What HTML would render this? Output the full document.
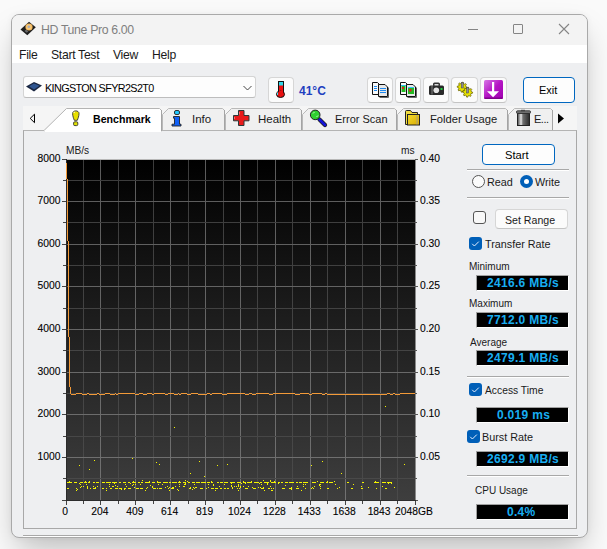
<!DOCTYPE html>
<html><head><meta charset="utf-8">
<style>
*{margin:0;padding:0;box-sizing:border-box}
html,body{width:607px;height:549px;overflow:hidden;background:#fafafa;font-family:"Liberation Sans",sans-serif;color:#1a1a1a}
.a{position:absolute}
.t{position:absolute;white-space:nowrap;line-height:1}
#win{left:11px;top:14px;width:577px;height:524px;border:1px solid #a9a9a9;border-radius:8px;background:#eeeff1;overflow:hidden;box-shadow:0 16px 32px -6px rgba(0,0,0,0.26),0 0 6px rgba(0,0,0,0.05)}
.btn{position:absolute;background:#fbfbfb;border:1px solid #d6d6d6;border-bottom-color:#c4c4c4;border-radius:4px}
.vbox{position:absolute;left:476px;width:93px;height:16px;background:#000;border-top:1px solid #a0a0a0;border-left:1px solid #a0a0a0;border-bottom:1px solid #fff;border-right:1px solid #fff}
.vt{position:absolute;white-space:nowrap;line-height:1;font-weight:bold;color:#18aef2;font-size:12px;letter-spacing:0.3px}
.cb{position:absolute;width:13px;height:13px;border-radius:3px;background:#005fb8}
.sep{position:absolute;left:467px;width:102px;height:2px;border-top:1px solid #a8a8a8;border-bottom:1px solid #fff}
.lbl{font-size:11px}
.yl{font-size:10.3px;color:#000;-webkit-text-stroke:0.1px #000}
.tab{position:absolute;top:108px;height:23px;background:#f0f0f0;border:1px solid #b4b4b4;border-bottom:none;border-radius:0 4px 0 0}
</style></head><body>
<div id="win" class="a">
</div>
<!-- title bar -->
<div class="a" style="left:12px;top:15px;width:575px;height:30px;background:#f3f3f3;border-radius:7px 7px 0 0"></div>
<div class="a" style="left:12px;top:45px;width:575px;height:18px;background:#fff"></div>
<div class="t" style="left:41px;top:24px;font-size:12.3px;letter-spacing:-0.35px;color:#808080">HD Tune Pro 6.00</div>
<!-- window controls -->
<div class="a" style="left:468px;top:29px;width:10px;height:1px;background:#858585"></div>
<div class="a" style="left:513px;top:24px;width:10px;height:10px;border:1px solid #858585;border-radius:1px"></div>
<svg class="a" style="left:558px;top:23px" width="12" height="12"><path d="M1 1L11 11M11 1L1 11" stroke="#858585" stroke-width="1.1"/></svg>
<!-- menu -->
<div class="t" style="left:19px;top:49px;font-size:12.2px;letter-spacing:-0.3px">File</div>
<div class="t" style="left:51px;top:49px;font-size:12.2px;letter-spacing:-0.3px">Start Test</div>
<div class="t" style="left:113px;top:49px;font-size:12.2px;letter-spacing:-0.3px">View</div>
<div class="t" style="left:152px;top:49px;font-size:12.2px;letter-spacing:-0.3px">Help</div>

<!-- combo -->
<div class="a" style="left:23px;top:76px;width:233px;height:22px;background:#fdfdfd;border:1px solid #d4d4d4;border-bottom-color:#bdbdbd;border-radius:3px"></div>
<div class="t" style="left:45px;top:83px;font-size:10.8px;letter-spacing:-0.62px;color:#000">KINGSTON SFYR2S2T0</div>
<svg class="a" style="left:243px;top:85px" width="9" height="6"><path d="M0.5 1L4.5 5L8.5 1" fill="none" stroke="#444" stroke-width="1"/></svg>

<!-- thermo -->
<div class="btn" style="left:268px;top:77px;width:26px;height:26px"></div>
<div class="t" style="left:299px;top:85px;font-size:12px;font-weight:bold;color:#1f3fbf">41°C</div>

<!-- toolbar -->
<div class="btn" style="left:367px;top:77px;width:26px;height:26px"></div>
<div class="btn" style="left:395px;top:77px;width:26px;height:26px"></div>
<div class="btn" style="left:423px;top:77px;width:26px;height:26px"></div>
<div class="btn" style="left:451px;top:77px;width:27px;height:26px"></div>
<div class="btn" style="left:480px;top:77px;width:27px;height:26px"></div>

<!-- exit -->
<div class="a" style="left:523px;top:77px;width:52px;height:26px;background:#fdfdfd;border:1px solid #0067c0;border-radius:4px"></div>
<div class="t" style="left:539px;top:85px;font-size:11px;color:#000">Exit</div>

<!-- tab strip -->
<div class="a" style="left:23px;top:106px;width:554px;height:25px;background:#f5f5f5"></div>
<svg class="a" style="left:29px;top:113px" width="8" height="11"><path d="M5.5 1.2L1.2 5.4L5.5 9.7Z" fill="none" stroke="#000" stroke-width="1"/></svg>
<svg class="a" style="left:557px;top:113px" width="8" height="11"><path d="M1 0.5L7 5.5L1 10.5Z" fill="#000"/></svg>

<!-- panel -->
<div class="a" style="left:23px;top:130px;width:554px;height:399px;background:#eeeff1;border:1px solid #a8a8a8;border-top-color:#b4b4b4"></div>

<!-- tabs (inactive) -->
<svg class="a" style="left:0;top:0" width="607" height="140">
 <path d="M162.5 130V114.5L168.5 108.5H222.5L224.5 110.5V130" fill="#f0f0f0" stroke="#b9b9b9"/>
 <path d="M224.5 110V130" stroke="#a4a4a4"/>
 <path d="M225.5 130V114.5L231.5 108.5H299.5L301.5 110.5V130" fill="#f0f0f0" stroke="#b9b9b9"/>
 <path d="M301.5 110V130" stroke="#a4a4a4"/>
 <path d="M302.5 130V114.5L308.5 108.5H394.5L396.5 110.5V130" fill="#f0f0f0" stroke="#b9b9b9"/>
 <path d="M396.5 110V130" stroke="#a4a4a4"/>
 <path d="M397.5 130V114.5L403.5 108.5H505.5L507.5 110.5V130" fill="#f0f0f0" stroke="#b9b9b9"/>
 <path d="M507.5 110V130" stroke="#a4a4a4"/>
 <path d="M508.5 130V114.5L514.5 108.5H550.5L552.5 110.5V130" fill="#f0f0f0" stroke="#b9b9b9"/>
 <path d="M552.5 110V130" stroke="#a4a4a4"/>
 <path d="M44 130.5L66.5 108.5H159.5L161.5 110.5V131H44Z" fill="#fff" stroke="#b4b4b4"/>
 <path d="M161.5 110V131" stroke="#a4a4a4"/>
 <rect x="44.5" y="130" width="116.5" height="2" fill="#fff"/>
</svg>
<!-- tab icons -->
<div class="t" style="left:93px;top:114px;font-size:10.6px;font-weight:bold;color:#000">Benchmark</div>
<div class="t" style="left:192px;top:114px;font-size:11.5px">Info</div>
<div class="t" style="left:258px;top:114px;font-size:11.5px">Health</div>
<div class="t" style="left:335px;top:114px;font-size:11px">Error Scan</div>
<div class="t" style="left:430px;top:114px;font-size:11.2px">Folder Usage</div>
<div class="t" style="left:534px;top:114px;font-size:11px;letter-spacing:-0.5px">E...</div>

<!-- icons -->
<svg class="a" style="left:0;top:0" width="607" height="140">
 <defs>
  <linearGradient id="pg" x1="0" y1="0" x2="1" y2="1"><stop offset="0" stop-color="#d778e6"/><stop offset="0.5" stop-color="#b414c4"/><stop offset="1" stop-color="#a000b0"/></linearGradient>
  <linearGradient id="tg" x1="0" y1="0" x2="1" y2="0"><stop offset="0" stop-color="#444"/><stop offset="0.3" stop-color="#e8e8e8"/><stop offset="0.45" stop-color="#707070"/><stop offset="1" stop-color="#2a2a2a"/></linearGradient>
  <linearGradient id="fg" x1="0" y1="0" x2="1" y2="1"><stop offset="0" stop-color="#f4de30"/><stop offset="1" stop-color="#d8a800"/></linearGradient>
 </defs>
 <!-- title hdd -->
 <path d="M20.5 29.5L29 21.8L35.8 27.3L27.3 35.2Z" fill="#1e1e1e"/>
 <circle cx="29" cy="27" r="3.6" fill="#f2b65a"/>
 <circle cx="29" cy="27" r="2.6" fill="#f6c878"/>
 <circle cx="28.8" cy="26.8" r="1.3" fill="#a9adbb"/>
 <path d="M24.5 31L26.8 32.8L28.4 31.4L26.2 29.6Z" fill="#6a6a6a"/>
 <!-- ssd -->
 <path d="M26 86.5L34 82L42 85.5L34 91.5Z" fill="#1a2640"/>
 <path d="M29 86.3L34 83.5L39.5 85.7L34 89.5Z" fill="#2f5590"/>
 <!-- thermometer -->
 <rect x="278.5" y="81.5" width="5" height="12" fill="#f01010" stroke="#111"/>
 <rect x="279" y="82" width="4" height="3.5" fill="#30d8e8"/>
 <ellipse cx="280.5" cy="94.3" rx="4" ry="3.2" fill="#e81010" stroke="#111"/>
 <rect x="279" y="91" width="4" height="3" fill="#e81010"/>
 <path d="M277.5 92.5V95" stroke="#40e0f0"/>
 <!-- copy text -->
 <path d="M372.5 82.5H377.5L379 84V94.5H372.5Z" fill="#f8f8f8" stroke="#111"/>
 <path d="M374 86.5H377M374 88.5H377M374 90.5H377" stroke="#1f8af0"/>
 <path d="M378.5 84.5H385L387.5 87V96.5H378.5Z" fill="#e8e8e8" stroke="#111"/>
 <path d="M380 88.5H386M380 90.5H386M380 92.5H386" stroke="#1f8af0"/>
 <path d="M388.5 87.5V97.5H379.5" fill="none" stroke="#666"/>
 <!-- copy image -->
 <path d="M400.5 82.5H405.5L407 84V94.5H400.5Z" fill="#f8f8f8" stroke="#111"/>
 <rect x="401.5" y="86" width="4" height="6" fill="#22bb22"/><rect x="402" y="87" width="2" height="2" fill="#e02020"/><rect x="401" y="85" width="5" height="1" fill="#30c0f0"/>
 <path d="M406.5 84.5H413L415.5 87V96.5H406.5Z" fill="#e8e8e8" stroke="#111"/>
 <rect x="408" y="88" width="6" height="6" fill="#22bb22"/><rect x="409" y="89" width="2.5" height="2.5" fill="#e02020"/><rect x="408" y="87" width="6" height="1" fill="#30c0f0"/>
 <path d="M416.5 87.5V97.5H407.5" fill="none" stroke="#666"/>
 <!-- camera -->
 <rect x="433" y="82.5" width="7" height="4" rx="1.5" fill="#333"/>
 <rect x="434.5" y="84" width="4" height="2" fill="#ddd"/>
 <rect x="429" y="85.5" width="15" height="9.5" rx="1.5" fill="#2a2a2a"/>
 <rect x="431" y="86" width="2" height="8.5" fill="#555"/>
 <circle cx="436.3" cy="90.3" r="2.8" fill="#e4e4e4"/>
 <rect x="440.5" y="88" width="2" height="2" fill="#20d040"/>
 <!-- gears -->
 <g fill="#e8e400" stroke="#5a5200" stroke-width="0.7">
  <path d="M462.20 82.20L463.18 82.30L463.58 83.87L464.20 84.21L465.74 83.66L466.36 84.42L465.53 85.82L465.73 86.50L467.20 87.20L467.10 88.18L465.53 88.58L465.19 89.20L465.74 90.74L464.98 91.36L463.58 90.53L462.90 90.73L462.20 92.20L461.22 92.10L460.82 90.53L460.20 90.19L458.66 90.74L458.04 89.98L458.87 88.58L458.67 87.90L457.20 87.20L457.30 86.22L458.87 85.82L459.21 85.20L458.66 83.66L459.42 83.04L460.82 83.87L461.50 83.67Z"/>
  <path d="M467.60 87.20L468.58 87.30L468.98 88.87L469.60 89.21L471.14 88.66L471.76 89.42L470.93 90.82L471.13 91.50L472.60 92.20L472.50 93.18L470.93 93.58L470.59 94.20L471.14 95.74L470.38 96.36L468.98 95.53L468.30 95.73L467.60 97.20L466.62 97.10L466.22 95.53L465.60 95.19L464.06 95.74L463.44 94.98L464.27 93.58L464.07 92.90L462.60 92.20L462.70 91.22L464.27 90.82L464.61 90.20L464.06 88.66L464.82 88.04L466.22 88.87L466.90 88.67Z"/>
 </g>
 <rect x="461.2" y="82.5" width="2" height="5.5" fill="#8c8c9c" stroke="#444" stroke-width="0.5"/>
 <rect x="466.6" y="87.5" width="2" height="5.5" fill="#8c8c9c" stroke="#444" stroke-width="0.5"/>
 <!-- purple download -->
 <rect x="484" y="80" width="19" height="19" rx="1.5" fill="url(#pg)"/>
 <rect x="484.5" y="97.5" width="18" height="1.5" fill="#80008a"/>
 <rect x="492" y="82" width="2.2" height="10" fill="#fff"/>
 <path d="M487 91.3H499L493.1 97.2Z" fill="#fff"/>
 <!-- exclamation -->
 <path d="M72.6 113.5C72.6 110 79 110 79 113.5C79 116 78 118.5 77.3 120.3H74.3C73.6 118.5 72.6 116 72.6 113.5Z" fill="#e8e000" stroke="#333" stroke-width="0.9"/>
 <path d="M73.8 113L74.6 111.8" stroke="#fff" stroke-width="1"/>
 <rect x="73.6" y="121.8" width="4.2" height="3.8" rx="1.2" fill="#e0e000" stroke="#333" stroke-width="0.9"/>
 <!-- info i -->
 <rect x="174.5" y="110.5" width="5" height="4" rx="1.5" fill="#20c8ff" stroke="#222" stroke-width="0.9"/>
 <path d="M173.5 116.5H179.5V124.2H181V126H172V124.2H174.5V118.2H173.5Z" fill="#1060f8" stroke="#222" stroke-width="0.9"/>
 <!-- red cross -->
 <path d="M238.5 110.5H244V115.5H249V120.8H244V125.5H238.5V120.8H233.5V115.5H238.5Z" fill="#e81c1c" stroke="#2a3a3a" stroke-width="1"/>
 <path d="M239.5 112V114.5M234.5 117V119" stroke="#ff8080" stroke-width="0.8"/>
 <!-- magnifier -->
 <path d="M319.5 119.5L325 125" stroke="#222" stroke-width="4.2" stroke-linecap="round"/>
 <path d="M319.5 119.5L325 125" stroke="#1414d8" stroke-width="2.6" stroke-linecap="round"/>
 <circle cx="315.2" cy="114.9" r="4.8" fill="#30d030" stroke="#222" stroke-width="1"/>
 <path d="M313 113.5L314.5 112M316.5 117L318 115.5" stroke="#c8ffc8" stroke-width="1"/>
 <!-- folder -->
 <path d="M405.5 111.5Q405.5 110.5 406.5 110.5H410.5L412 112.5H417.5V124.5H405.5Z" fill="#f0dc40" stroke="#222" stroke-width="1"/>
 <rect x="407.5" y="114.5" width="12" height="10.5" fill="url(#fg)" stroke="#222" stroke-width="1"/>
 <path d="M417 115.5V124.5" stroke="#999" stroke-width="0.8"/>
 <!-- trash -->
 <rect x="517.5" y="113" width="12" height="12.5" fill="url(#tg)" stroke="#222" stroke-width="1"/>
 <rect x="516.5" y="110.8" width="14" height="2.6" rx="1" fill="#777" stroke="#222" stroke-width="0.8"/>
 <rect x="521" y="109.8" width="4" height="1.5" fill="#444"/>
</svg>
<!-- chart -->
<svg class="a" style="left:0;top:0" width="607" height="549">
 <defs><linearGradient id="g" x1="0" y1="0" x2="0" y2="1"><stop offset="0" stop-color="#000"/><stop offset="1" stop-color="#3e3e3e"/></linearGradient>
 <linearGradient id="gmaj" gradientUnits="userSpaceOnUse" x1="0" y1="159" x2="0" y2="500"><stop offset="0" stop-color="#5a5a5a"/><stop offset="1" stop-color="#727272"/></linearGradient>
 <linearGradient id="gmin" gradientUnits="userSpaceOnUse" x1="0" y1="159" x2="0" y2="500"><stop offset="0" stop-color="#3c3c3c"/><stop offset="1" stop-color="#4a4a4a"/></linearGradient></defs>
 <g shape-rendering="crispEdges"><rect x="66" y="159" width="349" height="341" fill="url(#g)"/>
 <rect x="83" y="159" width="1" height="341" fill="url(#gmin)"/><rect x="100" y="159" width="1" height="341" fill="url(#gmaj)"/><rect x="118" y="159" width="1" height="341" fill="url(#gmin)"/><rect x="135" y="159" width="1" height="341" fill="url(#gmaj)"/><rect x="153" y="159" width="1" height="341" fill="url(#gmin)"/><rect x="170" y="159" width="1" height="341" fill="url(#gmaj)"/><rect x="188" y="159" width="1" height="341" fill="url(#gmin)"/><rect x="205" y="159" width="1" height="341" fill="url(#gmaj)"/><rect x="223" y="159" width="1" height="341" fill="url(#gmin)"/><rect x="240" y="159" width="1" height="341" fill="url(#gmaj)"/><rect x="257" y="159" width="1" height="341" fill="url(#gmin)"/><rect x="275" y="159" width="1" height="341" fill="url(#gmaj)"/><rect x="292" y="159" width="1" height="341" fill="url(#gmin)"/><rect x="310" y="159" width="1" height="341" fill="url(#gmaj)"/><rect x="327" y="159" width="1" height="341" fill="url(#gmin)"/><rect x="345" y="159" width="1" height="341" fill="url(#gmaj)"/><rect x="362" y="159" width="1" height="341" fill="url(#gmin)"/><rect x="380" y="159" width="1" height="341" fill="url(#gmaj)"/><rect x="397" y="159" width="1" height="341" fill="url(#gmin)"/><rect x="66" y="478" width="349" height="1" fill="#494949"/><rect x="66" y="457" width="349" height="1" fill="#6f6f6f"/><rect x="66" y="436" width="349" height="1" fill="#474747"/><rect x="66" y="414" width="349" height="1" fill="#6c6c6c"/><rect x="66" y="393" width="349" height="1" fill="#464646"/><rect x="66" y="372" width="349" height="1" fill="#696969"/><rect x="66" y="350" width="349" height="1" fill="#444444"/><rect x="66" y="329" width="349" height="1" fill="#666666"/><rect x="66" y="308" width="349" height="1" fill="#424242"/><rect x="66" y="286" width="349" height="1" fill="#636363"/><rect x="66" y="265" width="349" height="1" fill="#404040"/><rect x="66" y="244" width="349" height="1" fill="#606060"/><rect x="66" y="222" width="349" height="1" fill="#3f3f3f"/><rect x="66" y="201" width="349" height="1" fill="#5d5d5d"/><rect x="66" y="180" width="349" height="1" fill="#3d3d3d"/><rect x="66" y="159" width="349" height="1" fill="#b8b8b8"/><rect x="66" y="159" width="1" height="341" fill="#2a2a2a"/><rect x="415" y="159" width="1" height="342" fill="#8a8a8a"/><rect x="62" y="500" width="4" height="1" fill="#444"/><rect x="415" y="500" width="3" height="1" fill="#555"/><rect x="63" y="478" width="3" height="1" fill="#444"/><rect x="415" y="478" width="2" height="1" fill="#555"/><rect x="62" y="457" width="4" height="1" fill="#444"/><rect x="415" y="457" width="3" height="1" fill="#555"/><rect x="63" y="436" width="3" height="1" fill="#444"/><rect x="415" y="436" width="2" height="1" fill="#555"/><rect x="62" y="414" width="4" height="1" fill="#444"/><rect x="415" y="414" width="3" height="1" fill="#555"/><rect x="63" y="393" width="3" height="1" fill="#444"/><rect x="415" y="393" width="2" height="1" fill="#555"/><rect x="62" y="372" width="4" height="1" fill="#444"/><rect x="415" y="372" width="3" height="1" fill="#555"/><rect x="63" y="350" width="3" height="1" fill="#444"/><rect x="415" y="350" width="2" height="1" fill="#555"/><rect x="62" y="329" width="4" height="1" fill="#444"/><rect x="415" y="329" width="3" height="1" fill="#555"/><rect x="63" y="308" width="3" height="1" fill="#444"/><rect x="415" y="308" width="2" height="1" fill="#555"/><rect x="62" y="286" width="4" height="1" fill="#444"/><rect x="415" y="286" width="3" height="1" fill="#555"/><rect x="63" y="265" width="3" height="1" fill="#444"/><rect x="415" y="265" width="2" height="1" fill="#555"/><rect x="62" y="244" width="4" height="1" fill="#444"/><rect x="415" y="244" width="3" height="1" fill="#555"/><rect x="63" y="222" width="3" height="1" fill="#444"/><rect x="415" y="222" width="2" height="1" fill="#555"/><rect x="62" y="201" width="4" height="1" fill="#444"/><rect x="415" y="201" width="3" height="1" fill="#555"/><rect x="63" y="180" width="3" height="1" fill="#444"/><rect x="415" y="180" width="2" height="1" fill="#555"/><rect x="62" y="159" width="4" height="1" fill="#444"/><rect x="415" y="159" width="3" height="1" fill="#555"/><rect x="66" y="500" width="1" height="5" fill="#444"/><rect x="83" y="500" width="1" height="4" fill="#444"/><rect x="100" y="500" width="1" height="5" fill="#444"/><rect x="118" y="500" width="1" height="4" fill="#444"/><rect x="135" y="500" width="1" height="5" fill="#444"/><rect x="153" y="500" width="1" height="4" fill="#444"/><rect x="170" y="500" width="1" height="5" fill="#444"/><rect x="188" y="500" width="1" height="4" fill="#444"/><rect x="205" y="500" width="1" height="5" fill="#444"/><rect x="223" y="500" width="1" height="4" fill="#444"/><rect x="240" y="500" width="1" height="5" fill="#444"/><rect x="257" y="500" width="1" height="4" fill="#444"/><rect x="275" y="500" width="1" height="5" fill="#444"/><rect x="292" y="500" width="1" height="4" fill="#444"/><rect x="310" y="500" width="1" height="5" fill="#444"/><rect x="327" y="500" width="1" height="4" fill="#444"/><rect x="345" y="500" width="1" height="5" fill="#444"/><rect x="362" y="500" width="1" height="4" fill="#444"/><rect x="380" y="500" width="1" height="5" fill="#444"/><rect x="397" y="500" width="1" height="4" fill="#444"/><rect x="415" y="500" width="1" height="5" fill="#444"/><rect x="66" y="500" width="350" height="1" fill="#2c2c2c"/>
 <rect x="79" y="465" width="1" height="1" fill="#f4f400"/><rect x="89" y="469" width="1" height="1" fill="#f4f400"/><rect x="94" y="460" width="1" height="1" fill="#f4f400"/><rect x="132" y="458" width="1" height="1" fill="#f4f400"/><rect x="174" y="427" width="1" height="1" fill="#f4f400"/><rect x="156" y="462" width="1" height="1" fill="#f4f400"/><rect x="159" y="464" width="1" height="1" fill="#f4f400"/><rect x="190" y="473" width="1" height="1" fill="#f4f400"/><rect x="199" y="461" width="1" height="1" fill="#f4f400"/><rect x="204" y="476" width="1" height="1" fill="#f4f400"/><rect x="217" y="465" width="1" height="1" fill="#f4f400"/><rect x="227" y="464" width="1" height="1" fill="#f4f400"/><rect x="385" y="406" width="1" height="1" fill="#f4f400"/><rect x="311" y="465" width="1" height="1" fill="#f4f400"/><rect x="322" y="461" width="1" height="1" fill="#f4f400"/><rect x="341" y="473" width="1" height="1" fill="#f4f400"/><rect x="404" y="464" width="1" height="1" fill="#f4f400"/><rect x="67" y="482" width="5" height="1" fill="#f4f400"/><rect x="74" y="482" width="3" height="1" fill="#f4f400"/><rect x="80" y="482" width="3" height="1" fill="#f4f400"/><rect x="84" y="482" width="3" height="1" fill="#f4f400"/><rect x="88" y="482" width="2" height="1" fill="#f4f400"/><rect x="93" y="482" width="2" height="1" fill="#f4f400"/><rect x="96" y="482" width="3" height="1" fill="#f4f400"/><rect x="102" y="482" width="3" height="1" fill="#f4f400"/><rect x="106" y="482" width="5" height="1" fill="#f4f400"/><rect x="112" y="482" width="5" height="1" fill="#f4f400"/><rect x="119" y="482" width="2" height="1" fill="#f4f400"/><rect x="123" y="482" width="3" height="1" fill="#f4f400"/><rect x="128" y="482" width="2" height="1" fill="#f4f400"/><rect x="132" y="482" width="4" height="1" fill="#f4f400"/><rect x="138" y="482" width="2" height="1" fill="#f4f400"/><rect x="141" y="482" width="2" height="1" fill="#f4f400"/><rect x="145" y="482" width="5" height="1" fill="#f4f400"/><rect x="152" y="482" width="3" height="1" fill="#f4f400"/><rect x="157" y="482" width="4" height="1" fill="#f4f400"/><rect x="163" y="482" width="5" height="1" fill="#f4f400"/><rect x="169" y="482" width="2" height="1" fill="#f4f400"/><rect x="172" y="482" width="5" height="1" fill="#f4f400"/><rect x="178" y="482" width="3" height="1" fill="#f4f400"/><rect x="183" y="482" width="3" height="1" fill="#f4f400"/><rect x="188" y="482" width="2" height="1" fill="#f4f400"/><rect x="192" y="482" width="3" height="1" fill="#f4f400"/><rect x="196" y="482" width="4" height="1" fill="#f4f400"/><rect x="201" y="482" width="5" height="1" fill="#f4f400"/><rect x="207" y="482" width="3" height="1" fill="#f4f400"/><rect x="211" y="482" width="2" height="1" fill="#f4f400"/><rect x="217" y="482" width="2" height="1" fill="#f4f400"/><rect x="220" y="482" width="3" height="1" fill="#f4f400"/><rect x="224" y="482" width="4" height="1" fill="#f4f400"/><rect x="230" y="482" width="5" height="1" fill="#f4f400"/><rect x="237" y="482" width="4" height="1" fill="#f4f400"/><rect x="243" y="482" width="3" height="1" fill="#f4f400"/><rect x="247" y="482" width="5" height="1" fill="#f4f400"/><rect x="254" y="482" width="5" height="1" fill="#f4f400"/><rect x="260" y="482" width="2" height="1" fill="#f4f400"/><rect x="264" y="482" width="5" height="1" fill="#f4f400"/><rect x="271" y="482" width="5" height="1" fill="#f4f400"/><rect x="278" y="482" width="2" height="1" fill="#f4f400"/><rect x="281" y="482" width="2" height="1" fill="#f4f400"/><rect x="285" y="482" width="3" height="1" fill="#f4f400"/><rect x="289" y="482" width="5" height="1" fill="#f4f400"/><rect x="296" y="482" width="2" height="1" fill="#f4f400"/><rect x="299" y="482" width="3" height="1" fill="#f4f400"/><rect x="303" y="482" width="5" height="1" fill="#f4f400"/><rect x="312" y="482" width="4" height="1" fill="#f4f400"/><rect x="320" y="482" width="4" height="1" fill="#f4f400"/><rect x="326" y="482" width="2" height="1" fill="#f4f400"/><rect x="329" y="482" width="4" height="1" fill="#f4f400"/><rect x="347" y="482" width="2" height="1" fill="#f4f400"/><rect x="362" y="482" width="2" height="1" fill="#f4f400"/><rect x="374" y="482" width="5" height="1" fill="#f4f400"/><rect x="382" y="482" width="4" height="1" fill="#f4f400"/><rect x="387" y="482" width="5" height="1" fill="#f4f400"/><rect x="67" y="488" width="2" height="1" fill="#f4f400"/><rect x="76" y="488" width="1" height="1" fill="#f4f400"/><rect x="87" y="488" width="1" height="1" fill="#f4f400"/><rect x="90" y="488" width="1" height="1" fill="#f4f400"/><rect x="93" y="488" width="3" height="1" fill="#f4f400"/><rect x="102" y="488" width="2" height="1" fill="#f4f400"/><rect x="106" y="488" width="1" height="1" fill="#f4f400"/><rect x="110" y="488" width="2" height="1" fill="#f4f400"/><rect x="115" y="488" width="3" height="1" fill="#f4f400"/><rect x="119" y="488" width="3" height="1" fill="#f4f400"/><rect x="124" y="488" width="2" height="1" fill="#f4f400"/><rect x="128" y="488" width="3" height="1" fill="#f4f400"/><rect x="136" y="488" width="3" height="1" fill="#f4f400"/><rect x="140" y="488" width="3" height="1" fill="#f4f400"/><rect x="146" y="488" width="1" height="1" fill="#f4f400"/><rect x="153" y="488" width="3" height="1" fill="#f4f400"/><rect x="157" y="488" width="1" height="1" fill="#f4f400"/><rect x="159" y="488" width="3" height="1" fill="#f4f400"/><rect x="168" y="488" width="1" height="1" fill="#f4f400"/><rect x="171" y="488" width="3" height="1" fill="#f4f400"/><rect x="189" y="488" width="2" height="1" fill="#f4f400"/><rect x="194" y="488" width="1" height="1" fill="#f4f400"/><rect x="200" y="488" width="3" height="1" fill="#f4f400"/><rect x="206" y="488" width="1" height="1" fill="#f4f400"/><rect x="211" y="488" width="3" height="1" fill="#f4f400"/><rect x="215" y="488" width="3" height="1" fill="#f4f400"/><rect x="220" y="488" width="2" height="1" fill="#f4f400"/><rect x="224" y="488" width="2" height="1" fill="#f4f400"/><rect x="227" y="488" width="2" height="1" fill="#f4f400"/><rect x="232" y="488" width="1" height="1" fill="#f4f400"/><rect x="237" y="488" width="1" height="1" fill="#f4f400"/><rect x="239" y="488" width="1" height="1" fill="#f4f400"/><rect x="245" y="488" width="3" height="1" fill="#f4f400"/><rect x="253" y="488" width="3" height="1" fill="#f4f400"/><rect x="261" y="488" width="3" height="1" fill="#f4f400"/><rect x="268" y="488" width="2" height="1" fill="#f4f400"/><rect x="271" y="488" width="1" height="1" fill="#f4f400"/><rect x="273" y="488" width="1" height="1" fill="#f4f400"/><rect x="282" y="488" width="3" height="1" fill="#f4f400"/><rect x="289" y="488" width="3" height="1" fill="#f4f400"/><rect x="296" y="488" width="3" height="1" fill="#f4f400"/><rect x="305" y="488" width="1" height="1" fill="#f4f400"/><rect x="311" y="488" width="1" height="1" fill="#f4f400"/><rect x="313" y="488" width="1" height="1" fill="#f4f400"/><rect x="320" y="488" width="1" height="1" fill="#f4f400"/><rect x="327" y="488" width="2" height="1" fill="#f4f400"/><rect x="337" y="488" width="1" height="1" fill="#f4f400"/><rect x="351" y="488" width="2" height="1" fill="#f4f400"/><rect x="361" y="488" width="2" height="1" fill="#f4f400"/><rect x="376" y="488" width="1" height="1" fill="#f4f400"/><rect x="385" y="488" width="2" height="1" fill="#f4f400"/><rect x="142" y="480" width="1" height="1" fill="#f4f400"/><rect x="185" y="480" width="1" height="1" fill="#f4f400"/><rect x="263" y="480" width="1" height="1" fill="#f4f400"/><rect x="270" y="480" width="1" height="1" fill="#f4f400"/><rect x="69" y="481" width="1" height="1" fill="#f4f400"/><rect x="85" y="481" width="1" height="1" fill="#f4f400"/><rect x="89" y="481" width="1" height="1" fill="#f4f400"/><rect x="133" y="481" width="1" height="1" fill="#f4f400"/><rect x="149" y="481" width="1" height="1" fill="#f4f400"/><rect x="157" y="481" width="1" height="1" fill="#f4f400"/><rect x="179" y="481" width="1" height="1" fill="#f4f400"/><rect x="187" y="481" width="1" height="1" fill="#f4f400"/><rect x="211" y="481" width="1" height="1" fill="#f4f400"/><rect x="243" y="481" width="1" height="1" fill="#f4f400"/><rect x="251" y="481" width="1" height="1" fill="#f4f400"/><rect x="270" y="481" width="1" height="1" fill="#f4f400"/><rect x="274" y="481" width="1" height="1" fill="#f4f400"/><rect x="317" y="481" width="1" height="1" fill="#f4f400"/><rect x="327" y="481" width="1" height="1" fill="#f4f400"/><rect x="334" y="481" width="1" height="1" fill="#f4f400"/><rect x="375" y="481" width="1" height="1" fill="#f4f400"/><rect x="79" y="483" width="1" height="1" fill="#f4f400"/><rect x="114" y="483" width="1" height="1" fill="#f4f400"/><rect x="130" y="483" width="1" height="1" fill="#f4f400"/><rect x="185" y="483" width="1" height="1" fill="#f4f400"/><rect x="231" y="483" width="1" height="1" fill="#f4f400"/><rect x="241" y="483" width="1" height="1" fill="#f4f400"/><rect x="245" y="483" width="1" height="1" fill="#f4f400"/><rect x="259" y="483" width="1" height="1" fill="#f4f400"/><rect x="267" y="483" width="1" height="1" fill="#f4f400"/><rect x="278" y="483" width="1" height="1" fill="#f4f400"/><rect x="388" y="483" width="1" height="1" fill="#f4f400"/><rect x="391" y="483" width="1" height="1" fill="#f4f400"/><rect x="80" y="484" width="1" height="1" fill="#f4f400"/><rect x="86" y="484" width="1" height="1" fill="#f4f400"/><rect x="109" y="484" width="1" height="1" fill="#f4f400"/><rect x="125" y="484" width="1" height="1" fill="#f4f400"/><rect x="133" y="484" width="1" height="1" fill="#f4f400"/><rect x="135" y="484" width="1" height="1" fill="#f4f400"/><rect x="140" y="484" width="1" height="1" fill="#f4f400"/><rect x="158" y="484" width="1" height="1" fill="#f4f400"/><rect x="162" y="484" width="1" height="1" fill="#f4f400"/><rect x="179" y="484" width="1" height="1" fill="#f4f400"/><rect x="184" y="484" width="1" height="1" fill="#f4f400"/><rect x="185" y="484" width="1" height="1" fill="#f4f400"/><rect x="194" y="484" width="1" height="1" fill="#f4f400"/><rect x="208" y="484" width="1" height="1" fill="#f4f400"/><rect x="213" y="484" width="1" height="1" fill="#f4f400"/><rect x="224" y="484" width="1" height="1" fill="#f4f400"/><rect x="238" y="484" width="1" height="1" fill="#f4f400"/><rect x="261" y="484" width="1" height="1" fill="#f4f400"/><rect x="267" y="484" width="1" height="1" fill="#f4f400"/><rect x="303" y="484" width="1" height="1" fill="#f4f400"/><rect x="305" y="484" width="1" height="1" fill="#f4f400"/><rect x="319" y="484" width="1" height="1" fill="#f4f400"/><rect x="320" y="484" width="1" height="1" fill="#f4f400"/><rect x="335" y="484" width="1" height="1" fill="#f4f400"/><rect x="353" y="484" width="1" height="1" fill="#f4f400"/><rect x="115" y="485" width="1" height="1" fill="#f4f400"/><rect x="132" y="485" width="1" height="1" fill="#f4f400"/><rect x="150" y="485" width="1" height="1" fill="#f4f400"/><rect x="213" y="485" width="1" height="1" fill="#f4f400"/><rect x="231" y="485" width="1" height="1" fill="#f4f400"/><rect x="238" y="485" width="1" height="1" fill="#f4f400"/><rect x="285" y="485" width="1" height="1" fill="#f4f400"/><rect x="319" y="485" width="1" height="1" fill="#f4f400"/><rect x="81" y="486" width="1" height="1" fill="#f4f400"/><rect x="83" y="486" width="1" height="1" fill="#f4f400"/><rect x="87" y="486" width="1" height="1" fill="#f4f400"/><rect x="93" y="486" width="1" height="1" fill="#f4f400"/><rect x="97" y="486" width="1" height="1" fill="#f4f400"/><rect x="109" y="486" width="1" height="1" fill="#f4f400"/><rect x="112" y="486" width="1" height="1" fill="#f4f400"/><rect x="113" y="486" width="1" height="1" fill="#f4f400"/><rect x="117" y="486" width="1" height="1" fill="#f4f400"/><rect x="126" y="486" width="1" height="1" fill="#f4f400"/><rect x="152" y="486" width="1" height="1" fill="#f4f400"/><rect x="167" y="486" width="1" height="1" fill="#f4f400"/><rect x="175" y="486" width="1" height="1" fill="#f4f400"/><rect x="179" y="486" width="1" height="1" fill="#f4f400"/><rect x="183" y="486" width="1" height="1" fill="#f4f400"/><rect x="184" y="486" width="1" height="1" fill="#f4f400"/><rect x="219" y="486" width="1" height="1" fill="#f4f400"/><rect x="231" y="486" width="1" height="1" fill="#f4f400"/><rect x="234" y="486" width="1" height="1" fill="#f4f400"/><rect x="236" y="486" width="1" height="1" fill="#f4f400"/><rect x="238" y="486" width="1" height="1" fill="#f4f400"/><rect x="240" y="486" width="1" height="1" fill="#f4f400"/><rect x="243" y="486" width="1" height="1" fill="#f4f400"/><rect x="248" y="486" width="1" height="1" fill="#f4f400"/><rect x="270" y="486" width="1" height="1" fill="#f4f400"/><rect x="297" y="486" width="1" height="1" fill="#f4f400"/><rect x="303" y="486" width="1" height="1" fill="#f4f400"/><rect x="314" y="486" width="1" height="1" fill="#f4f400"/><rect x="320" y="486" width="1" height="1" fill="#f4f400"/><rect x="361" y="486" width="1" height="1" fill="#f4f400"/><rect x="382" y="486" width="1" height="1" fill="#f4f400"/><rect x="80" y="487" width="1" height="1" fill="#f4f400"/><rect x="87" y="487" width="1" height="1" fill="#f4f400"/><rect x="95" y="487" width="1" height="1" fill="#f4f400"/><rect x="134" y="487" width="1" height="1" fill="#f4f400"/><rect x="147" y="487" width="1" height="1" fill="#f4f400"/><rect x="152" y="487" width="1" height="1" fill="#f4f400"/><rect x="165" y="487" width="1" height="1" fill="#f4f400"/><rect x="169" y="487" width="1" height="1" fill="#f4f400"/><rect x="172" y="487" width="1" height="1" fill="#f4f400"/><rect x="173" y="487" width="1" height="1" fill="#f4f400"/><rect x="190" y="487" width="1" height="1" fill="#f4f400"/><rect x="193" y="487" width="1" height="1" fill="#f4f400"/><rect x="195" y="487" width="1" height="1" fill="#f4f400"/><rect x="196" y="487" width="1" height="1" fill="#f4f400"/><rect x="208" y="487" width="1" height="1" fill="#f4f400"/><rect x="232" y="487" width="1" height="1" fill="#f4f400"/><rect x="240" y="487" width="1" height="1" fill="#f4f400"/><rect x="252" y="487" width="1" height="1" fill="#f4f400"/><rect x="258" y="487" width="1" height="1" fill="#f4f400"/><rect x="260" y="487" width="1" height="1" fill="#f4f400"/><rect x="263" y="487" width="1" height="1" fill="#f4f400"/><rect x="291" y="487" width="1" height="1" fill="#f4f400"/><rect x="312" y="487" width="1" height="1" fill="#f4f400"/><rect x="339" y="487" width="1" height="1" fill="#f4f400"/><rect x="368" y="487" width="1" height="1" fill="#f4f400"/><rect x="394" y="487" width="1" height="1" fill="#f4f400"/><rect x="77" y="489" width="1" height="1" fill="#f4f400"/><rect x="121" y="489" width="1" height="1" fill="#f4f400"/><rect x="124" y="489" width="1" height="1" fill="#f4f400"/><rect x="177" y="489" width="1" height="1" fill="#f4f400"/><rect x="192" y="489" width="1" height="1" fill="#f4f400"/><rect x="291" y="489" width="1" height="1" fill="#f4f400"/><rect x="76" y="490" width="1" height="1" fill="#f4f400"/><rect x="106" y="490" width="1" height="1" fill="#f4f400"/><rect x="145" y="490" width="1" height="1" fill="#f4f400"/><rect x="169" y="490" width="1" height="1" fill="#f4f400"/><rect x="178" y="490" width="1" height="1" fill="#f4f400"/><rect x="215" y="490" width="1" height="1" fill="#f4f400"/><rect x="238" y="490" width="1" height="1" fill="#f4f400"/><rect x="264" y="490" width="1" height="1" fill="#f4f400"/><rect x="271" y="490" width="1" height="1" fill="#f4f400"/><rect x="272" y="490" width="1" height="1" fill="#f4f400"/><rect x="301" y="490" width="1" height="1" fill="#f4f400"/></g>
 <g shape-rendering="crispEdges"><rect x="66" y="163" width="1" height="16" fill="#f39a38"/><rect x="67" y="179" width="1" height="62" fill="#f39a38"/><rect x="68" y="241" width="1" height="96" fill="#f39a38"/><rect x="69" y="337" width="1" height="50" fill="#f39a38"/><rect x="70" y="387" width="1" height="7" fill="#f39a38"/><rect x="71" y="394" width="1" height="1" fill="#f39a38"/><rect x="72" y="394" width="1" height="1" fill="#f39a38"/><rect x="73" y="394" width="1" height="1" fill="#f39a38"/><rect x="74" y="394" width="1" height="1" fill="#f39a38"/><rect x="75" y="394" width="1" height="1" fill="#f39a38"/><rect x="76" y="393" width="1" height="1" fill="#f39a38"/><rect x="77" y="393" width="1" height="1" fill="#f39a38"/><rect x="78" y="393" width="1" height="1" fill="#f39a38"/><rect x="79" y="393" width="1" height="1" fill="#f39a38"/><rect x="80" y="393" width="1" height="1" fill="#f39a38"/><rect x="81" y="393" width="1" height="1" fill="#f39a38"/><rect x="82" y="394" width="5" height="1" fill="#f39a38"/><rect x="87" y="393" width="1" height="1" fill="#f39a38"/><rect x="88" y="393" width="1" height="1" fill="#f39a38"/><rect x="89" y="394" width="3" height="1" fill="#f39a38"/><rect x="92" y="394" width="5" height="1" fill="#f39a38"/><rect x="97" y="393" width="1" height="1" fill="#f39a38"/><rect x="98" y="393" width="1" height="1" fill="#f39a38"/><rect x="99" y="394" width="3" height="1" fill="#f39a38"/><rect x="102" y="394" width="3" height="1" fill="#f39a38"/><rect x="105" y="393" width="1" height="1" fill="#f39a38"/><rect x="106" y="393" width="1" height="1" fill="#f39a38"/><rect x="107" y="393" width="1" height="1" fill="#f39a38"/><rect x="108" y="393" width="1" height="1" fill="#f39a38"/><rect x="109" y="393" width="1" height="1" fill="#f39a38"/><rect x="110" y="394" width="5" height="1" fill="#f39a38"/><rect x="115" y="393" width="1" height="1" fill="#f39a38"/><rect x="116" y="394" width="2" height="1" fill="#f39a38"/><rect x="118" y="393" width="1" height="1" fill="#f39a38"/><rect x="119" y="393" width="1" height="1" fill="#f39a38"/><rect x="120" y="393" width="1" height="1" fill="#f39a38"/><rect x="121" y="393" width="1" height="1" fill="#f39a38"/><rect x="122" y="393" width="1" height="1" fill="#f39a38"/><rect x="123" y="393" width="1" height="1" fill="#f39a38"/><rect x="124" y="393" width="1" height="1" fill="#f39a38"/><rect x="125" y="393" width="1" height="1" fill="#f39a38"/><rect x="126" y="393" width="1" height="1" fill="#f39a38"/><rect x="127" y="393" width="1" height="1" fill="#f39a38"/><rect x="128" y="393" width="1" height="1" fill="#f39a38"/><rect x="129" y="393" width="1" height="1" fill="#f39a38"/><rect x="130" y="393" width="1" height="1" fill="#f39a38"/><rect x="131" y="393" width="1" height="1" fill="#f39a38"/><rect x="132" y="393" width="1" height="1" fill="#f39a38"/><rect x="133" y="393" width="1" height="1" fill="#f39a38"/><rect x="134" y="393" width="1" height="1" fill="#f39a38"/><rect x="135" y="394" width="4" height="1" fill="#f39a38"/><rect x="139" y="393" width="1" height="1" fill="#f39a38"/><rect x="140" y="393" width="1" height="1" fill="#f39a38"/><rect x="141" y="393" width="1" height="1" fill="#f39a38"/><rect x="142" y="393" width="1" height="1" fill="#f39a38"/><rect x="143" y="394" width="4" height="1" fill="#f39a38"/><rect x="147" y="393" width="1" height="1" fill="#f39a38"/><rect x="148" y="393" width="1" height="1" fill="#f39a38"/><rect x="149" y="393" width="1" height="1" fill="#f39a38"/><rect x="150" y="393" width="1" height="1" fill="#f39a38"/><rect x="151" y="393" width="1" height="1" fill="#f39a38"/><rect x="152" y="394" width="2" height="1" fill="#f39a38"/><rect x="154" y="393" width="1" height="1" fill="#f39a38"/><rect x="155" y="393" width="1" height="1" fill="#f39a38"/><rect x="156" y="393" width="1" height="1" fill="#f39a38"/><rect x="157" y="393" width="1" height="1" fill="#f39a38"/><rect x="158" y="393" width="1" height="1" fill="#f39a38"/><rect x="159" y="393" width="1" height="1" fill="#f39a38"/><rect x="160" y="393" width="1" height="1" fill="#f39a38"/><rect x="161" y="393" width="1" height="1" fill="#f39a38"/><rect x="162" y="393" width="1" height="1" fill="#f39a38"/><rect x="163" y="393" width="1" height="1" fill="#f39a38"/><rect x="164" y="393" width="1" height="1" fill="#f39a38"/><rect x="165" y="394" width="3" height="1" fill="#f39a38"/><rect x="168" y="393" width="1" height="1" fill="#f39a38"/><rect x="169" y="393" width="1" height="1" fill="#f39a38"/><rect x="170" y="393" width="1" height="1" fill="#f39a38"/><rect x="171" y="393" width="1" height="1" fill="#f39a38"/><rect x="172" y="393" width="1" height="1" fill="#f39a38"/><rect x="173" y="393" width="1" height="1" fill="#f39a38"/><rect x="174" y="394" width="4" height="1" fill="#f39a38"/><rect x="178" y="393" width="1" height="1" fill="#f39a38"/><rect x="179" y="394" width="2" height="1" fill="#f39a38"/><rect x="181" y="393" width="1" height="1" fill="#f39a38"/><rect x="182" y="393" width="1" height="1" fill="#f39a38"/><rect x="183" y="393" width="1" height="1" fill="#f39a38"/><rect x="184" y="393" width="1" height="1" fill="#f39a38"/><rect x="185" y="393" width="1" height="1" fill="#f39a38"/><rect x="186" y="393" width="1" height="1" fill="#f39a38"/><rect x="187" y="394" width="4" height="1" fill="#f39a38"/><rect x="191" y="393" width="1" height="1" fill="#f39a38"/><rect x="192" y="393" width="1" height="1" fill="#f39a38"/><rect x="193" y="393" width="1" height="1" fill="#f39a38"/><rect x="194" y="393" width="1" height="1" fill="#f39a38"/><rect x="195" y="393" width="1" height="1" fill="#f39a38"/><rect x="196" y="393" width="1" height="1" fill="#f39a38"/><rect x="197" y="393" width="1" height="1" fill="#f39a38"/><rect x="198" y="394" width="5" height="1" fill="#f39a38"/><rect x="203" y="394" width="4" height="1" fill="#f39a38"/><rect x="207" y="393" width="1" height="1" fill="#f39a38"/><rect x="208" y="393" width="1" height="1" fill="#f39a38"/><rect x="209" y="393" width="1" height="1" fill="#f39a38"/><rect x="210" y="394" width="2" height="1" fill="#f39a38"/><rect x="212" y="393" width="1" height="1" fill="#f39a38"/><rect x="213" y="393" width="1" height="1" fill="#f39a38"/><rect x="214" y="393" width="1" height="1" fill="#f39a38"/><rect x="215" y="393" width="1" height="1" fill="#f39a38"/><rect x="216" y="393" width="1" height="1" fill="#f39a38"/><rect x="217" y="393" width="1" height="1" fill="#f39a38"/><rect x="218" y="393" width="1" height="1" fill="#f39a38"/><rect x="219" y="393" width="1" height="1" fill="#f39a38"/><rect x="220" y="393" width="1" height="1" fill="#f39a38"/><rect x="221" y="393" width="1" height="1" fill="#f39a38"/><rect x="222" y="394" width="5" height="1" fill="#f39a38"/><rect x="227" y="393" width="1" height="1" fill="#f39a38"/><rect x="228" y="393" width="1" height="1" fill="#f39a38"/><rect x="229" y="393" width="1" height="1" fill="#f39a38"/><rect x="230" y="393" width="1" height="1" fill="#f39a38"/><rect x="231" y="393" width="1" height="1" fill="#f39a38"/><rect x="232" y="393" width="1" height="1" fill="#f39a38"/><rect x="233" y="393" width="1" height="1" fill="#f39a38"/><rect x="234" y="393" width="1" height="1" fill="#f39a38"/><rect x="235" y="393" width="1" height="1" fill="#f39a38"/><rect x="236" y="393" width="1" height="1" fill="#f39a38"/><rect x="237" y="393" width="1" height="1" fill="#f39a38"/><rect x="238" y="393" width="1" height="1" fill="#f39a38"/><rect x="239" y="393" width="1" height="1" fill="#f39a38"/><rect x="240" y="393" width="1" height="1" fill="#f39a38"/><rect x="241" y="393" width="1" height="1" fill="#f39a38"/><rect x="242" y="393" width="1" height="1" fill="#f39a38"/><rect x="243" y="393" width="1" height="1" fill="#f39a38"/><rect x="244" y="393" width="1" height="1" fill="#f39a38"/><rect x="245" y="394" width="4" height="1" fill="#f39a38"/><rect x="249" y="393" width="1" height="1" fill="#f39a38"/><rect x="250" y="393" width="1" height="1" fill="#f39a38"/><rect x="251" y="393" width="1" height="1" fill="#f39a38"/><rect x="252" y="394" width="4" height="1" fill="#f39a38"/><rect x="256" y="393" width="1" height="1" fill="#f39a38"/><rect x="257" y="393" width="1" height="1" fill="#f39a38"/><rect x="258" y="393" width="1" height="1" fill="#f39a38"/><rect x="259" y="393" width="1" height="1" fill="#f39a38"/><rect x="260" y="393" width="1" height="1" fill="#f39a38"/><rect x="261" y="393" width="1" height="1" fill="#f39a38"/><rect x="262" y="393" width="1" height="1" fill="#f39a38"/><rect x="263" y="393" width="1" height="1" fill="#f39a38"/><rect x="264" y="393" width="1" height="1" fill="#f39a38"/><rect x="265" y="393" width="1" height="1" fill="#f39a38"/><rect x="266" y="393" width="1" height="1" fill="#f39a38"/><rect x="267" y="393" width="1" height="1" fill="#f39a38"/><rect x="268" y="393" width="1" height="1" fill="#f39a38"/><rect x="269" y="394" width="4" height="1" fill="#f39a38"/><rect x="273" y="393" width="1" height="1" fill="#f39a38"/><rect x="274" y="393" width="1" height="1" fill="#f39a38"/><rect x="275" y="393" width="1" height="1" fill="#f39a38"/><rect x="276" y="393" width="1" height="1" fill="#f39a38"/><rect x="277" y="393" width="1" height="1" fill="#f39a38"/><rect x="278" y="393" width="1" height="1" fill="#f39a38"/><rect x="279" y="393" width="1" height="1" fill="#f39a38"/><rect x="280" y="393" width="1" height="1" fill="#f39a38"/><rect x="281" y="393" width="1" height="1" fill="#f39a38"/><rect x="282" y="393" width="1" height="1" fill="#f39a38"/><rect x="283" y="393" width="1" height="1" fill="#f39a38"/><rect x="284" y="393" width="1" height="1" fill="#f39a38"/><rect x="285" y="393" width="1" height="1" fill="#f39a38"/><rect x="286" y="393" width="1" height="1" fill="#f39a38"/><rect x="287" y="393" width="1" height="1" fill="#f39a38"/><rect x="288" y="393" width="1" height="1" fill="#f39a38"/><rect x="289" y="393" width="1" height="1" fill="#f39a38"/><rect x="290" y="393" width="1" height="1" fill="#f39a38"/><rect x="291" y="393" width="1" height="1" fill="#f39a38"/><rect x="292" y="393" width="1" height="1" fill="#f39a38"/><rect x="293" y="393" width="1" height="1" fill="#f39a38"/><rect x="294" y="393" width="1" height="1" fill="#f39a38"/><rect x="295" y="394" width="5" height="1" fill="#f39a38"/><rect x="300" y="393" width="1" height="1" fill="#f39a38"/><rect x="301" y="393" width="1" height="1" fill="#f39a38"/><rect x="302" y="393" width="1" height="1" fill="#f39a38"/><rect x="303" y="393" width="1" height="1" fill="#f39a38"/><rect x="304" y="393" width="1" height="1" fill="#f39a38"/><rect x="305" y="393" width="1" height="1" fill="#f39a38"/><rect x="306" y="393" width="1" height="1" fill="#f39a38"/><rect x="307" y="393" width="1" height="1" fill="#f39a38"/><rect x="308" y="393" width="1" height="1" fill="#f39a38"/><rect x="309" y="394" width="3" height="1" fill="#f39a38"/><rect x="312" y="393" width="1" height="1" fill="#f39a38"/><rect x="313" y="393" width="1" height="1" fill="#f39a38"/><rect x="314" y="393" width="1" height="1" fill="#f39a38"/><rect x="315" y="393" width="1" height="1" fill="#f39a38"/><rect x="316" y="393" width="1" height="1" fill="#f39a38"/><rect x="317" y="393" width="1" height="1" fill="#f39a38"/><rect x="318" y="393" width="1" height="1" fill="#f39a38"/><rect x="319" y="393" width="1" height="1" fill="#f39a38"/><rect x="320" y="393" width="1" height="1" fill="#f39a38"/><rect x="321" y="393" width="1" height="1" fill="#f39a38"/><rect x="322" y="394" width="3" height="1" fill="#f39a38"/><rect x="325" y="393" width="1" height="1" fill="#f39a38"/><rect x="326" y="393" width="1" height="1" fill="#f39a38"/><rect x="327" y="394" width="1" height="1" fill="#f39a38"/><rect x="328" y="394" width="1" height="1" fill="#f39a38"/><rect x="329" y="394" width="1" height="1" fill="#f39a38"/><rect x="330" y="394" width="1" height="1" fill="#f39a38"/><rect x="331" y="394" width="1" height="1" fill="#f39a38"/><rect x="332" y="394" width="1" height="1" fill="#f39a38"/><rect x="333" y="394" width="1" height="1" fill="#f39a38"/><rect x="334" y="394" width="1" height="1" fill="#f39a38"/><rect x="335" y="394" width="1" height="1" fill="#f39a38"/><rect x="336" y="394" width="1" height="1" fill="#f39a38"/><rect x="337" y="394" width="1" height="1" fill="#f39a38"/><rect x="338" y="394" width="1" height="1" fill="#f39a38"/><rect x="339" y="394" width="1" height="1" fill="#f39a38"/><rect x="340" y="394" width="1" height="1" fill="#f39a38"/><rect x="341" y="394" width="1" height="1" fill="#f39a38"/><rect x="342" y="394" width="1" height="1" fill="#f39a38"/><rect x="343" y="394" width="1" height="1" fill="#f39a38"/><rect x="344" y="394" width="1" height="1" fill="#f39a38"/><rect x="345" y="394" width="1" height="1" fill="#f39a38"/><rect x="346" y="394" width="1" height="1" fill="#f39a38"/><rect x="347" y="394" width="1" height="1" fill="#f39a38"/><rect x="348" y="394" width="1" height="1" fill="#f39a38"/><rect x="349" y="394" width="1" height="1" fill="#f39a38"/><rect x="350" y="394" width="1" height="1" fill="#f39a38"/><rect x="351" y="394" width="1" height="1" fill="#f39a38"/><rect x="352" y="394" width="1" height="1" fill="#f39a38"/><rect x="353" y="394" width="1" height="1" fill="#f39a38"/><rect x="354" y="394" width="1" height="1" fill="#f39a38"/><rect x="355" y="394" width="1" height="1" fill="#f39a38"/><rect x="356" y="394" width="1" height="1" fill="#f39a38"/><rect x="357" y="394" width="1" height="1" fill="#f39a38"/><rect x="358" y="394" width="1" height="1" fill="#f39a38"/><rect x="359" y="394" width="1" height="1" fill="#f39a38"/><rect x="360" y="394" width="1" height="1" fill="#f39a38"/><rect x="361" y="394" width="1" height="1" fill="#f39a38"/><rect x="362" y="394" width="1" height="1" fill="#f39a38"/><rect x="363" y="394" width="1" height="1" fill="#f39a38"/><rect x="364" y="394" width="1" height="1" fill="#f39a38"/><rect x="365" y="394" width="1" height="1" fill="#f39a38"/><rect x="366" y="394" width="1" height="1" fill="#f39a38"/><rect x="367" y="394" width="1" height="1" fill="#f39a38"/><rect x="368" y="394" width="1" height="1" fill="#f39a38"/><rect x="369" y="394" width="1" height="1" fill="#f39a38"/><rect x="370" y="394" width="1" height="1" fill="#f39a38"/><rect x="371" y="394" width="1" height="1" fill="#f39a38"/><rect x="372" y="394" width="1" height="1" fill="#f39a38"/><rect x="373" y="394" width="1" height="1" fill="#f39a38"/><rect x="374" y="394" width="1" height="1" fill="#f39a38"/><rect x="375" y="394" width="1" height="1" fill="#f39a38"/><rect x="376" y="394" width="1" height="1" fill="#f39a38"/><rect x="377" y="394" width="1" height="1" fill="#f39a38"/><rect x="378" y="394" width="1" height="1" fill="#f39a38"/><rect x="379" y="394" width="1" height="1" fill="#f39a38"/><rect x="380" y="394" width="1" height="1" fill="#f39a38"/><rect x="381" y="394" width="1" height="1" fill="#f39a38"/><rect x="382" y="394" width="1" height="1" fill="#f39a38"/><rect x="383" y="394" width="1" height="1" fill="#f39a38"/><rect x="384" y="394" width="1" height="1" fill="#f39a38"/><rect x="385" y="394" width="1" height="1" fill="#f39a38"/><rect x="386" y="394" width="1" height="1" fill="#f39a38"/><rect x="387" y="393" width="1" height="1" fill="#f39a38"/><rect x="388" y="393" width="1" height="1" fill="#f39a38"/><rect x="389" y="393" width="1" height="1" fill="#f39a38"/><rect x="390" y="394" width="3" height="1" fill="#f39a38"/><rect x="393" y="393" width="1" height="1" fill="#f39a38"/><rect x="394" y="393" width="1" height="1" fill="#f39a38"/><rect x="395" y="394" width="5" height="1" fill="#f39a38"/><rect x="400" y="393" width="1" height="1" fill="#f39a38"/><rect x="401" y="393" width="1" height="1" fill="#f39a38"/><rect x="402" y="393" width="1" height="1" fill="#f39a38"/><rect x="403" y="393" width="1" height="1" fill="#f39a38"/><rect x="404" y="393" width="1" height="1" fill="#f39a38"/><rect x="405" y="393" width="1" height="1" fill="#f39a38"/><rect x="406" y="393" width="1" height="1" fill="#f39a38"/><rect x="407" y="393" width="1" height="1" fill="#f39a38"/><rect x="408" y="393" width="1" height="1" fill="#f39a38"/><rect x="409" y="393" width="1" height="1" fill="#f39a38"/><rect x="410" y="393" width="1" height="1" fill="#f39a38"/><rect x="411" y="393" width="1" height="1" fill="#f39a38"/><rect x="412" y="393" width="1" height="1" fill="#f39a38"/><rect x="413" y="393" width="1" height="1" fill="#f39a38"/><rect x="414" y="393" width="1" height="1" fill="#f39a38"/></g>
</svg>
<div class="t yl" style="right:546.5px;top:494.5px"></div>
<div class="t yl" style="right:546.5px;top:451.9px">1000</div>
<div class="t yl" style="right:546.5px;top:409.2px">2000</div>
<div class="t yl" style="right:546.5px;top:366.6px">3000</div>
<div class="t yl" style="right:546.5px;top:324.0px">4000</div>
<div class="t yl" style="right:546.5px;top:281.4px">5000</div>
<div class="t yl" style="right:546.5px;top:238.8px">6000</div>
<div class="t yl" style="right:546.5px;top:196.1px">7000</div>
<div class="t yl" style="right:546.5px;top:153.5px">8000</div>
<div class="t yl" style="left:420px;top:451.9px">0.05</div>
<div class="t yl" style="left:420px;top:409.2px">0.10</div>
<div class="t yl" style="left:420px;top:366.6px">0.15</div>
<div class="t yl" style="left:420px;top:324.0px">0.20</div>
<div class="t yl" style="left:420px;top:281.4px">0.25</div>
<div class="t yl" style="left:420px;top:238.8px">0.30</div>
<div class="t yl" style="left:420px;top:196.1px">0.35</div>
<div class="t yl" style="left:420px;top:153.5px">0.40</div>
<div class="t yl" style="left:65.0px;top:506.5px;transform:translateX(-50%)">0</div>
<div class="t yl" style="left:99.9px;top:506.5px;transform:translateX(-50%)">204</div>
<div class="t yl" style="left:134.8px;top:506.5px;transform:translateX(-50%)">409</div>
<div class="t yl" style="left:169.7px;top:506.5px;transform:translateX(-50%)">614</div>
<div class="t yl" style="left:204.6px;top:506.5px;transform:translateX(-50%)">819</div>
<div class="t yl" style="left:239.5px;top:506.5px;transform:translateX(-50%)">1024</div>
<div class="t yl" style="left:274.4px;top:506.5px;transform:translateX(-50%)">1228</div>
<div class="t yl" style="left:309.3px;top:506.5px;transform:translateX(-50%)">1433</div>
<div class="t yl" style="left:344.2px;top:506.5px;transform:translateX(-50%)">1638</div>
<div class="t yl" style="left:379.1px;top:506.5px;transform:translateX(-50%)">1843</div>
<div class="t yl" style="left:395.0px;top:506.5px">2048GB</div>
<div class="t" style="left:66px;top:146px;font-size:10.2px">MB/s</div>
<div class="t" style="left:401px;top:146px;font-size:10.2px">ms</div>

<!-- right panel -->
<div class="a" style="left:482px;top:144px;width:73px;height:21px;background:#fdfdfd;border:1px solid #0067c0;border-radius:4px"></div>
<div class="t" style="left:505px;top:150px;font-size:11.2px;color:#000">Start</div>
<div class="sep" style="top:169px"></div>
<div class="a" style="left:472px;top:175px;width:13px;height:13px;border:1px solid #555;border-radius:50%;background:#fbfbfb"></div>
<div class="t" style="left:487px;top:177px;font-size:10.8px">Read</div>
<div class="a" style="left:520px;top:175px;width:13px;height:13px;border-radius:50%;background:#005fb8"></div>
<div class="a" style="left:524px;top:179px;width:5px;height:5px;border-radius:50%;background:#fff"></div>
<div class="t" style="left:535px;top:177px;font-size:10.8px">Write</div>
<div class="sep" style="top:197px"></div>
<div class="a" style="left:473px;top:211px;width:13px;height:13px;border:1px solid #555;border-radius:3px;background:#f8f8f8"></div>
<div class="btn" style="left:495px;top:209px;width:73px;height:20px"></div>
<div class="t" style="left:505px;top:215px;font-size:10.6px">Set Range</div>
<div class="cb" style="left:469px;top:237px"></div>
<svg class="a" style="left:469px;top:237px" width="13" height="13"><path d="M3.2 6.8L5.4 9L9.8 4.6" fill="none" stroke="#e6efff" stroke-width="1"/></svg>
<div class="t" style="left:485px;top:239px;font-size:10.8px">Transfer Rate</div>
<div class="t" style="left:469px;top:262px;font-size:10px">Minimum</div>
<div class="vbox" style="top:275px"></div>
<div class="vt" style="left:487px;top:277px">2416.6 MB/s</div>
<div class="t" style="left:469px;top:299px;font-size:10px">Maximum</div>
<div class="vbox" style="top:312px"></div>
<div class="vt" style="left:487px;top:314px">7712.0 MB/s</div>
<div class="t" style="left:470px;top:338px;font-size:10px">Average</div>
<div class="vbox" style="top:350px"></div>
<div class="vt" style="left:487px;top:352px">2479.1 MB/s</div>
<div class="sep" style="top:376px"></div>
<div class="cb" style="left:469px;top:383px"></div>
<svg class="a" style="left:469px;top:383px" width="13" height="13"><path d="M3.2 6.8L5.4 9L9.8 4.6" fill="none" stroke="#e6efff" stroke-width="1"/></svg>
<div class="t" style="left:485px;top:386px;font-size:10.3px">Access Time</div>
<div class="vbox" style="top:407px"></div>
<div class="vt" style="left:497px;top:409px">0.019 ms</div>
<div class="cb" style="left:467px;top:430px"></div>
<svg class="a" style="left:467px;top:430px" width="13" height="13"><path d="M3.2 6.8L5.4 9L9.8 4.6" fill="none" stroke="#e6efff" stroke-width="1"/></svg>
<div class="t" style="left:482px;top:432px;font-size:10.8px">Burst Rate</div>
<div class="vbox" style="top:451px"></div>
<div class="vt" style="left:487px;top:453px">2692.9 MB/s</div>
<div class="sep" style="top:475px"></div>
<div class="t" style="left:475px;top:486px;font-size:10px">CPU Usage</div>
<div class="vbox" style="top:504px"></div>
<div class="vt" style="left:507px;top:506px">0.4%</div>
<div class="a" style="left:23px;top:535px;width:555px;height:1px;background:#a8a8a8"></div><div class="a" style="left:23px;top:536px;width:555px;height:1px;background:#fff"></div>
</body></html>
